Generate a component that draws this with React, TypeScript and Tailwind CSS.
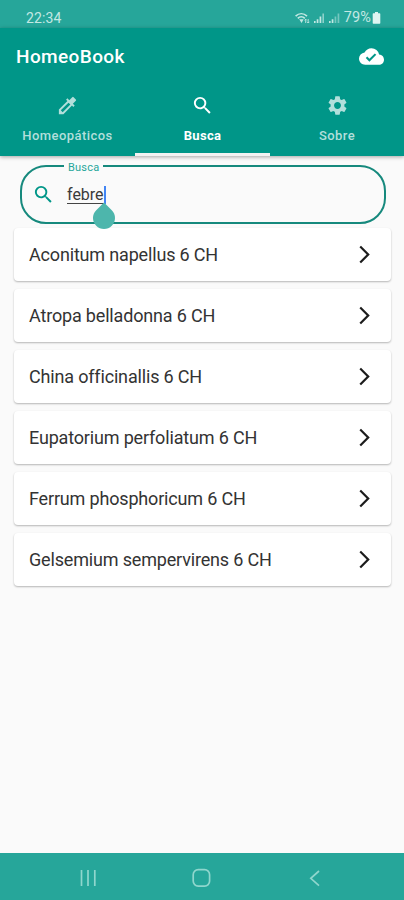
import React from "react";
import { MdColorize, MdSearch, MdSettings, MdCloudDone, MdArrowForwardIos } from "react-icons/md";

const remedies = [
  "Aconitum napellus 6 CH",
  "Atropa belladonna 6 CH",
  "China officinallis 6 CH",
  "Eupatorium perfoliatum 6 CH",
  "Ferrum phosphoricum 6 CH",
  "Gelsemium sempervirens 6 CH",
];

function StatusBar() {
  return (
    <div className="flex h-7 items-center bg-[#26a69a] pt-[8px] pr-[23px] pl-[26px] text-[#c3e8e3]">
      <span className="text-[14px] leading-5 tracking-[0.15px]">22:34</span>
      <div className="ml-auto flex items-center">
        <svg width="15" height="12" viewBox="0 0 15 12" fill="none" stroke="currentColor" strokeWidth="1.7">
          <path d="M.6 4.2C4 .9 8.6 .9 12 4.2M2.8 6.3c2-2 5-2 7 0" />
          <path d="M4.2 7.2h4.4L6.6 11z" fill="currentColor" stroke="none" />
          <path d="M10.7 11V7.2M9.5 8.4l1.2-1.2 1.2 1.2M13.2 7v4M12 9.8l1.2 1.2 1.2-1.2" strokeWidth="0.9" />
        </svg>
        <svg className="ml-[3px]" width="12" height="12" viewBox="0 0 12 12" fill="currentColor">
          <path d="M1 9h1.6v2H1zM3.7 7.2h1.7V11H3.7zM6.6 4.5h1.7V11H6.6z" />
          <path d="M9.4 1.5H11V11H9.4z" opacity=".65" />
        </svg>
        <svg className="ml-[3px]" width="13" height="12" viewBox="0 0 13 12" fill="currentColor">
          <path d="M1 9h1.6v2H1zM3.7 7.2h1.7V11H3.7z" />
          <path d="M6.6 4.5h1.7V11H6.6zM9.6 1.5h1.7V11H9.6z" opacity=".5" />
        </svg>
        <span className="ml-[3px] text-[14.5px] leading-5 tracking-[0.1px]">79%</span>
        <svg className="ml-[1px]" width="9" height="12" viewBox="0 0 9 12" fill="#dff5f1">
          <path d="M3 0h3v1.3h1.6q.7 0 .7.7v9q0 .7-.7.7H1.4q-.7 0-.7-.7V2q0-.7.7-.7H3z" />
        </svg>
      </div>
    </div>
  );
}

function Header() {
  return (
    <header className="relative z-10 flex h-[128px] flex-col bg-[#009688] shadow-[0_1px_4px_rgba(0,0,0,0.35)]">
      <div className="flex h-[56px] items-center justify-between pr-[20px] pl-[16px] text-white">
        <h1 className="pt-px text-[19px] leading-6 font-medium tracking-[0.4px]">HomeoBook</h1>
        <MdCloudDone size={25} />
      </div>
      <nav className="grid h-[72px] grid-cols-[135px_135px_134px] text-[13px] leading-4 font-medium text-[#b2dfdb]">
        <div className="flex flex-col items-center pt-[10px]">
          <MdColorize size={23} />
          <span className="mt-[11px] tracking-[0.45px]">Homeopáticos</span>
        </div>
        <div className="flex flex-col items-center border-b-[3px] border-[#f2f2f2] pt-[10px] text-white">
          <MdSearch size={23} />
          <span className="mt-[11px] font-bold tracking-[0.3px]">Busca</span>
        </div>
        <div className="flex flex-col items-center pt-[10px]">
          <MdSettings size={23} />
          <span className="mt-[11px] tracking-[0.4px]">Sobre</span>
        </div>
      </nav>
    </header>
  );
}

function SearchField() {
  return (
    <div className="relative mr-[18px] ml-[20px] mt-[9px] flex h-[59px] items-center rounded-[26px] border-2 border-[#16897d] pl-[10px]">
      <span className="absolute -top-[6px] left-[42px] bg-[#fafafa] px-[4px] text-[11px] leading-[14px] tracking-[0.2px] text-[#26a69a]">
        Busca
      </span>
      <MdSearch size={23} className="text-[#009688]" />
      <div className="relative ml-[12px] flex items-center">
        <span className="border-b border-[#444] text-[16px] leading-[17px] text-[#3a3a3a]">febre</span>
        <span className="h-[18px] w-[2px] bg-[#4285f4]" />
        <span className="absolute top-[21px] -right-[9px] size-[22px] rotate-45 rounded-full rounded-tl-none bg-[#4db6ac]" />
      </div>
    </div>
  );
}

function SystemNav() {
  return (
    <footer className="mt-auto flex h-[47px] items-center justify-between bg-[#26a69a] pt-[3px] pr-[80px] pl-[79px] text-[#8fd6cd]">
      <svg width="18" height="18" viewBox="0 0 18 18" stroke="currentColor" strokeWidth="1.7">
        <path d="M2.5 1v16M9 1v16M15.8 1v16" />
      </svg>
      <svg width="20" height="20" viewBox="0 0 20 20" fill="none" stroke="currentColor" strokeWidth="1.7">
        <rect x="1.2" y="1.7" width="16.4" height="16.4" rx="5" />
      </svg>
      <svg width="18" height="18" viewBox="0 0 18 18" fill="none" stroke="currentColor" strokeWidth="1.7">
        <path d="M13 2 4.8 9.3 13 16.6" />
      </svg>
    </footer>
  );
}

export default function App() {
  return (
    <div className="flex h-[900px] w-[404px] flex-col overflow-hidden bg-[#fafafa] font-[Roboto,sans-serif]">
      <StatusBar />
      <Header />
      <SearchField />
      <ul className="mt-[4px] mr-[13px] ml-[14px] flex flex-col gap-[8px]">
        {remedies.map((name) => (
          <li
            key={name}
            className="flex h-[53px] items-center justify-between rounded-[4px] bg-white pr-[16px] pl-[15px] shadow-[0_1px_2px_rgba(0,0,0,0.28)]"
          >
            <span className="text-[18px] leading-6 tracking-[-0.17px] text-[#333]">{name}</span>
            <MdArrowForwardIos size={21} className="text-[#1c1c1c]" />
          </li>
        ))}
      </ul>
      <SystemNav />
    </div>
  );
}
